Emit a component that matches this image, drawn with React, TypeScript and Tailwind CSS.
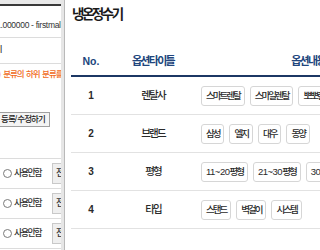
import React from "react";

function K({ t, hk }: { t: string; hk: string }) {
  const parts = t.split(/([가-힣]+)/).filter((p) => p.length > 0);
  return (
    <>
      {parts.map((p, i) =>
        /[가-힣]/.test(p) ? (
          <span key={i} className={hk}>
            {p}
          </span>
        ) : (
          <span key={i}>{p}</span>
        )
      )}
    </>
  );
}

function Chip({ t }: { t: string }) {
  return (
    <div className="shrink-0 h-[20px] px-[4px] border border-[#d6d6d6] rounded-[3px] bg-white flex items-center text-[9.5px] text-[#2a2a2a] whitespace-nowrap leading-none tracking-[-0.5px]">
      <K t={t} hk="tracking-[-2px] font-medium" />
    </div>
  );
}

const rows: { no: string; title: string; chips: string[] }[] = [
  { no: "1", title: "렌탈사", chips: ["스마트렌탈", "스마일렌탈", "뽀뽀렌탈"] },
  { no: "2", title: "브랜드", chips: ["삼성", "엘지", "대우", "동양"] },
  { no: "3", title: "평형", chips: ["11~20평형", "21~30평형", "30평형이상"] },
  { no: "4", title: "타입", chips: ["스탠드", "벽걸이", "시스템"] },
];

function LeftRow() {
  return (
    <div className="h-[30px] shrink-0 border-b border-[#dcdcdc] flex items-center whitespace-nowrap">
      <div className="w-[52px] shrink-0 flex items-center pl-[3px]">
        <div className="w-[9px] h-[9px] rounded-full border border-[#7a7a7a] bg-white shrink-0" />
        <span className="ml-[2px] text-[9px] text-[#333] leading-none">
          <K t="사용안함" hk="tracking-[-1.5px] font-medium" />
        </span>
      </div>
      <div className="w-[30px] shrink-0 h-[21px] bg-[#efefef] border border-[#c9c9c9] flex items-center pl-[3px] text-[9px] text-[#333]">
        <K t="전체" hk="tracking-[-1.5px] font-medium" />
      </div>
    </div>
  );
}

export default function App() {
  return (
    <div className="w-[320px] h-[250px] flex overflow-hidden bg-white font-[family-name:'Liberation_Sans','Noto_Sans_CJK_KR',sans-serif]">
      {/* background page */}
      <div className="w-[61px] h-full shrink-0 bg-white overflow-hidden flex flex-col">
        <div className="h-[4px] shrink-0 bg-[#e9e9e9]" />
        <div className="h-[2px] shrink-0 bg-[#3a3a3a]" />
        <div className="h-[32px] shrink-0 border-b border-[#dcdcdc] pt-[14px] leading-[10px] text-[8.5px] text-[#333] whitespace-nowrap -ml-[4px] tracking-[-0.3px]">
          1.000000 - firstmall
        </div>
        <div className="h-[26px] shrink-0 border-b border-[#dcdcdc] pt-[7px] leading-[10px] text-[10px] text-[#333]">
          l
        </div>
        <div className="h-[48px] shrink-0 pt-[5px] leading-[10px] text-[8.5px] text-[#f06a22] whitespace-nowrap -ml-[2px]">
          <K t=") 분류의 하위 분류를 선택" hk="tracking-[-1px] font-medium" />
        </div>
        <div className="h-[15px] shrink-0 w-[53px] -ml-[3px] border border-[#a0a0a0] bg-[#f4f4f4] flex items-center pl-[3px] text-[8.5px] text-[#222] whitespace-nowrap leading-none">
          <K t="등록/수정하기" hk="tracking-[-0.9px] font-medium" />
        </div>
        <div className="h-[32px] shrink-0 border-b border-[#dcdcdc]" />
        <LeftRow />
        <LeftRow />
        <LeftRow />
        <LeftRow />
      </div>
      <div className="w-[3px] h-full shrink-0 bg-[#e6e6e6]" />
      <div className="w-[1px] h-full shrink-0 bg-[#b9b9b9]" />
      {/* modal */}
      <div className="flex-1 h-full bg-white overflow-hidden pl-[6px]">
        <div className="pt-[7px] pl-[1px] text-[13.5px] font-bold leading-[16px] text-[#1a1a1a] whitespace-nowrap">
          <K t="냉온정수기" hk="tracking-[-2.5px]" />
        </div>
        <div className="mt-[25px] w-[350px]">
          <div className="h-[29px] border-b-2 border-[#1c3764] flex items-center text-[#21457c] font-bold whitespace-nowrap">
            <div className="w-[40px] shrink-0 text-center text-[10.5px]">No.</div>
            <div className="w-[84px] shrink-0 text-center text-[11px]">
              <K t="옵션타이틀" hk="tracking-[-1.7px]" />
            </div>
            <div className="w-[226px] shrink-0 text-center text-[11px]">
              <K t="옵션내용" hk="tracking-[-1.7px]" />
            </div>
          </div>
          {rows.map((r) => (
            <div key={r.no} className="h-[38px] border-b border-[#e2e2e2] flex items-center whitespace-nowrap">
              <div className="w-[40px] shrink-0 text-center text-[10px] font-bold text-[#2a2a2a]">{r.no}</div>
              <div className="w-[84px] shrink-0 text-center text-[10.5px] text-[#2a2a2a]">
                <K t={r.title} hk="tracking-[-1.8px] font-medium" />
              </div>
              <div className="w-[226px] shrink-0 flex items-center gap-[5px] pl-[6px] overflow-hidden">
                {r.chips.map((c) => (
                  <Chip key={c} t={c} />
                ))}
              </div>
            </div>
          ))}
        </div>
      </div>
    </div>
  );
}
